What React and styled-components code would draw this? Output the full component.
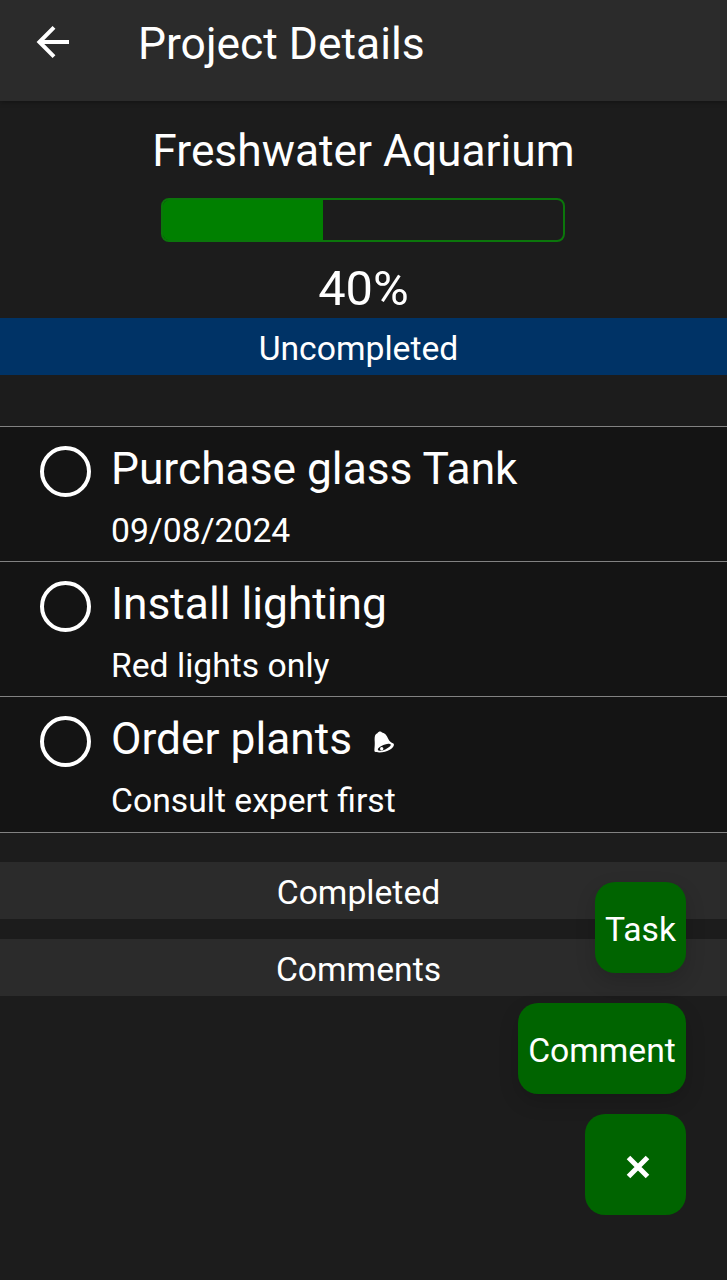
import React from "react";
import styled, { createGlobalStyle } from "styled-components";

const GlobalStyle = createGlobalStyle`
  * { box-sizing: border-box; }
  body { margin: 0; background: #1c1c1c; }
  h1, h2, p, ul { margin: 0; padding: 0; font-weight: 400; }
  button { border: 0; padding: 0; background: none; color: inherit; font: inherit; }
`;

const Screen = styled.main`
  position: relative;
  width: 100%;
  height: 1280px;
  overflow: hidden;
  background: #1c1c1c;
  color: #fff;
  font-family: Roboto, "Liberation Sans", sans-serif;
  font-size: 33.7px;
`;

const Header = styled.header`
  display: flex;
  align-items: flex-start;
  height: 101px;
  padding-left: 29px;
  background: #2b2b2b;
  box-shadow: 0 1px 5px rgba(0, 0, 0, 0.35);
`;

const BackButton = styled.button`
  display: flex;
  width: 48px;
  height: 48px;
  margin-top: 18px;
`;

const HeaderTitle = styled.h1`
  margin: 18px 0 0 61px;
  font-size: 44.4px;
  line-height: 52px;
`;

const Summary = styled.section`
  display: flex;
  flex-direction: column;
  align-items: center;
  height: 217px;
  padding-top: 24px;
`;

const ProjectName = styled.h2`
  font-size: 44.3px;
  line-height: 52px;
`;

const ProgressTrack = styled.div`
  width: 404px;
  height: 44px;
  margin: 21px 1px 0 0;
  border: 2px solid #0b760b;
  border-radius: 8px;
  overflow: hidden;
`;

const ProgressFill = styled.div`
  height: 100%;
  background: #008000;
  box-shadow: -2px 0 0 2px #008000;
`;

const Percent = styled.p`
  margin-top: 18px;
  font-size: 48.8px;
  line-height: 57px;
`;

const SectionBar = styled.button`
  display: block;
  width: 100%;
  height: 57px;
  margin-top: ${(p) => p.$gap || 0}px;
  padding: 4px 10px 0 0;
  background: ${(p) => (p.$active ? "#003366" : "#2b2b2b")};
  line-height: 53px;
  text-align: center;
`;

const TaskList = styled.ul`
  margin-top: 51px;
  border-top: 1px solid #828282;
  list-style: none;
`;

const TaskRow = styled.li`
  display: flex;
  height: 135.2px;
  padding: 19px 0 0 40px;
  border-bottom: 1px solid #828282;
  background: #141414;
`;

const Check = styled.button`
  width: 51px;
  height: 51px;
  border: 4px solid #fff;
  border-radius: 50%;
`;

const TaskText = styled.div`
  display: flex;
  flex-direction: column;
  margin-left: 20px;
`;

const TaskTitle = styled.div`
  display: flex;
  align-items: center;
  gap: 21px;
  margin-top: -3px;
  font-size: 44.3px;
  line-height: 52px;

  svg {
    margin-top: 4px;
  }
`;

const TaskNote = styled.p`
  margin-top: 16px;
  line-height: 40px;
`;

const Actions = styled.div`
  position: absolute;
  right: 41px;
  bottom: 65px;
  display: flex;
  flex-direction: column;
  align-items: flex-end;
`;

const ActionButton = styled.button`
  width: ${(p) => p.$width}px;
  height: 91px;
  margin-bottom: ${(p) => p.$below}px;
  padding-top: 5px;
  border-radius: 20px;
  background: #006400;
  box-shadow: 0 8px 20px rgba(0, 0, 0, 0.16);
  line-height: 40px;
  text-align: center;
`;

const CloseButton = styled.button`
  display: flex;
  align-items: center;
  justify-content: center;
  width: 101px;
  height: 101px;
  padding: 5px 0 0 4px;
  border-radius: 20px;
  background: #006400;
`;

const BackIcon = () => (
  <svg width="48" height="48" viewBox="0 0 24 24" fill="none" stroke="#fff" strokeWidth="2">
    <path d="M20 12H5.200M12.500 4.700 5.200 12l7.300 7.300" />
  </svg>
);

const BellIcon = () => (
  <svg width="22" height="24" viewBox="0 0 22 24">
    <path
      d="M1.600 22.600C1 20.500 2 17.500 1.700 12.500 1.400 8 1.700 5 4.400 4.200 5.300 2.300 8 1.700 9 3.400c3 .5 4.800 3 6.200 6.300 1.100 2.600 3 3.800 5.200 4.900 1.500 1.400-.4 4.100-3.200 6C12.600 23.500 4.800 24.300 1.600 22.600Z"
      fill="#fff"
    />
    <ellipse cx="11.300" cy="18.200" rx="7" ry="2.400" transform="rotate(-23 11.300 18.200)" fill="#141414" />
    <circle cx="8.700" cy="19.800" r="1.700" fill="#fff" />
  </svg>
);

const CloseIcon = () => (
  <svg width="26" height="26" viewBox="0 0 26 26" stroke="#fff" strokeWidth="5">
    <path d="m3.500 3.500 19 19m0-19-19 19" />
  </svg>
);

const tasks = [
  { title: "Purchase glass Tank", note: "09/08/2024" },
  { title: "Install lighting", note: "Red lights only" },
  { title: "Order plants", note: "Consult expert first", reminder: true },
];

const progress = 40;

export default function App() {
  return (
    <Screen>
      <GlobalStyle />
      <Header>
        <BackButton aria-label="Back">
          <BackIcon />
        </BackButton>
        <HeaderTitle>Project Details</HeaderTitle>
      </Header>
      <Summary>
        <ProjectName>Freshwater Aquarium</ProjectName>
        <ProgressTrack>
          <ProgressFill style={{ width: `${progress}%` }} />
        </ProgressTrack>
        <Percent>{progress}%</Percent>
      </Summary>
      <SectionBar $active>Uncompleted</SectionBar>
      <TaskList>
        {tasks.map((task) => (
          <TaskRow key={task.title}>
            <Check aria-label={`Complete ${task.title}`} />
            <TaskText>
              <TaskTitle>
                {task.title}
                {task.reminder && <BellIcon />}
              </TaskTitle>
              <TaskNote>{task.note}</TaskNote>
            </TaskText>
          </TaskRow>
        ))}
      </TaskList>
      <SectionBar $gap={29.5}>Completed</SectionBar>
      <SectionBar $gap={20}>Comments</SectionBar>
      <Actions>
        <ActionButton $width={91} $below={30}>Task</ActionButton>
        <ActionButton $width={168} $below={20}>Comment</ActionButton>
        <CloseButton aria-label="Close">
          <CloseIcon />
        </CloseButton>
      </Actions>
    </Screen>
  );
}
